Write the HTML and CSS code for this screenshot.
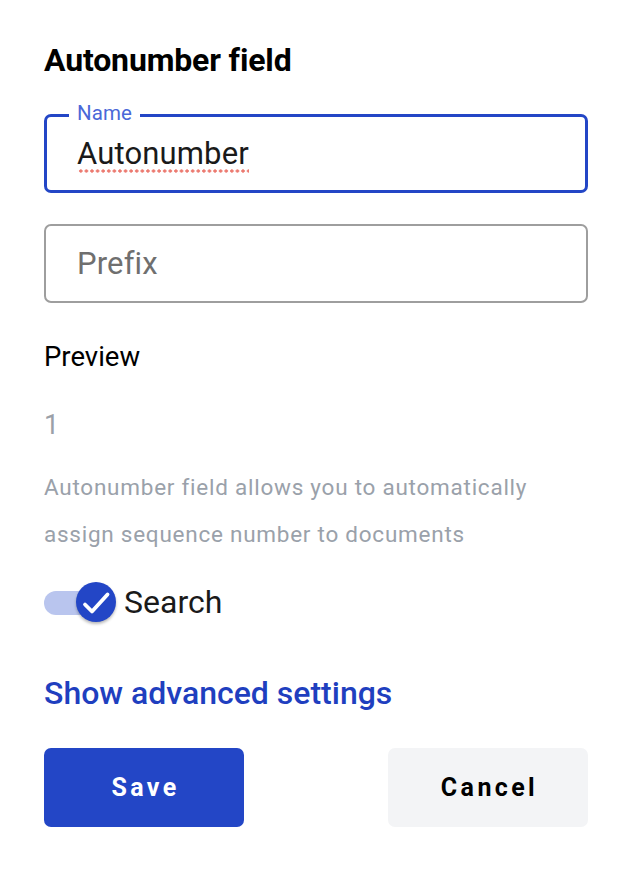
FILE: index.html
```html
<!DOCTYPE html>
<html>
<head>
<meta charset="utf-8">
<link rel="stylesheet" href="styles.css">
</head>
<body>
<div class="panel">
  <h1 class="title">Autonumber field</h1>
  <div class="field field-focused">
    <span class="field-label">Name</span>
    <span class="field-value spell">Autonumber</span>
  </div>
  <div class="field field-plain">
    <span class="field-placeholder">Prefix</span>
  </div>
  <div class="preview-label">Preview</div>
  <div class="preview-value">1</div>
  <p class="description">Autonumber field allows you to automatically assign sequence number to documents</p>
  <div class="toggle-row">
    <div class="toggle">
      <div class="toggle-track"></div>
      <div class="toggle-knob">
        <svg width="40" height="40" viewBox="0 0 40 40"><path d="M9 22.5 L16 29.5 L31.5 12.5" fill="none" stroke="#fff" stroke-width="3.8" stroke-linecap="round" stroke-linejoin="round"/></svg>
      </div>
    </div>
    <span class="toggle-label">Search</span>
  </div>
  <a class="advanced">Show advanced settings</a>
  <div class="actions">
    <button class="btn btn-primary">Save</button>
    <button class="btn btn-secondary">Cancel</button>
  </div>
</div>
</body>
</html>
```

FILE: styles.css
```css
html, body {
  margin: 0;
  padding: 0;
  background: #fff;
}
body {
  font-family: Roboto, "Liberation Sans", sans-serif;
  color: #111;
}
.panel {
  width: 544px;
  padding: 40px 46px 0 44px;
}
.title {
  margin: 0;
  font-size: 32px;
  line-height: 40px;
  font-weight: 700;
  color: #000;
  letter-spacing: -0.15px;
}
.field {
  box-sizing: border-box;
  width: 544px;
  height: 79px;
  border-radius: 7px;
  position: relative;
}
.field-focused {
  margin-top: 34px;
  border: 3px solid #2346c6;
  padding: 18px 0 0 30px;
}
.field-label {
  position: absolute;
  top: -14px;
  left: 22px;
  padding: 0 8px 0 8px;
  background: #fff;
  font-size: 20.5px;
  line-height: 20px;
  letter-spacing: 0.1px;
  color: #4a68d8;
}
.field-value {
  display: inline-block;
  font-size: 31px;
  line-height: 38px;
  letter-spacing: 0.15px;
  color: #1a1a1a;
}
.spell {
  background-image: radial-gradient(circle at 50% 50%, #ec7a70 1.4px, rgba(236,122,112,0) 1.9px);
  background-repeat: repeat-x;
  background-size: 5.6px 4px;
  background-position: 1px 100%;
}
.field-plain {
  margin-top: 31px;
  border: 2px solid #9e9e9e;
  padding: 0 0 0 31px;
  display: flex;
  align-items: center;
}
.field-placeholder {
  font-size: 31px;
  line-height: 38px;
  letter-spacing: 0.15px;
  color: #6f6f6f;
}
.preview-label {
  margin-top: 38px;
  font-size: 27.5px;
  line-height: 32px;
  color: #000;
}
.preview-value {
  margin-top: 36px;
  font-size: 27px;
  line-height: 32px;
  color: #9aa0a8;
}
.description {
  margin: 23px 0 0;
  width: 520px;
  font-size: 22.5px;
  line-height: 47px;
  letter-spacing: 0.75px;
  color: #9aa1aa;
}
.toggle-row {
  display: flex;
  align-items: center;
  margin-top: 24px;
  height: 40px;
}
.toggle {
  position: relative;
  width: 72px;
  height: 40px;
}
.toggle-track {
  position: absolute;
  left: 0;
  top: 9px;
  width: 60px;
  height: 24px;
  border-radius: 12px;
  background: #b9c5ee;
}
.toggle-knob {
  position: absolute;
  left: 32px;
  top: 0;
  width: 40px;
  height: 40px;
  border-radius: 50%;
  background: #2346c6;
  box-shadow: 0 2px 3px rgba(0,0,0,0.28);
}
.toggle-knob svg {
  display: block;
}
.toggle-label {
  margin-left: 8px;
  font-size: 32px;
  line-height: 40px;
  color: #1a1a1a;
}
.advanced {
  display: block;
  margin-top: 51px;
  font-size: 32px;
  line-height: 40px;
  font-weight: 500;
  color: #1f3fbf;
}
.actions {
  display: flex;
  justify-content: space-between;
  margin-top: 35px;
}
.btn {
  width: 200px;
  height: 79px;
  border: none;
  border-radius: 7px;
  font-family: Roboto, "Liberation Sans", sans-serif;
  font-size: 25px;
  font-weight: 700;
  letter-spacing: 3.4px;
  padding: 0 0 0 3px;
  cursor: pointer;
}
.btn-primary {
  background: #2346c6;
  color: #fff;
}
.btn-secondary {
  background: #f3f4f6;
  color: #000;
}
```
